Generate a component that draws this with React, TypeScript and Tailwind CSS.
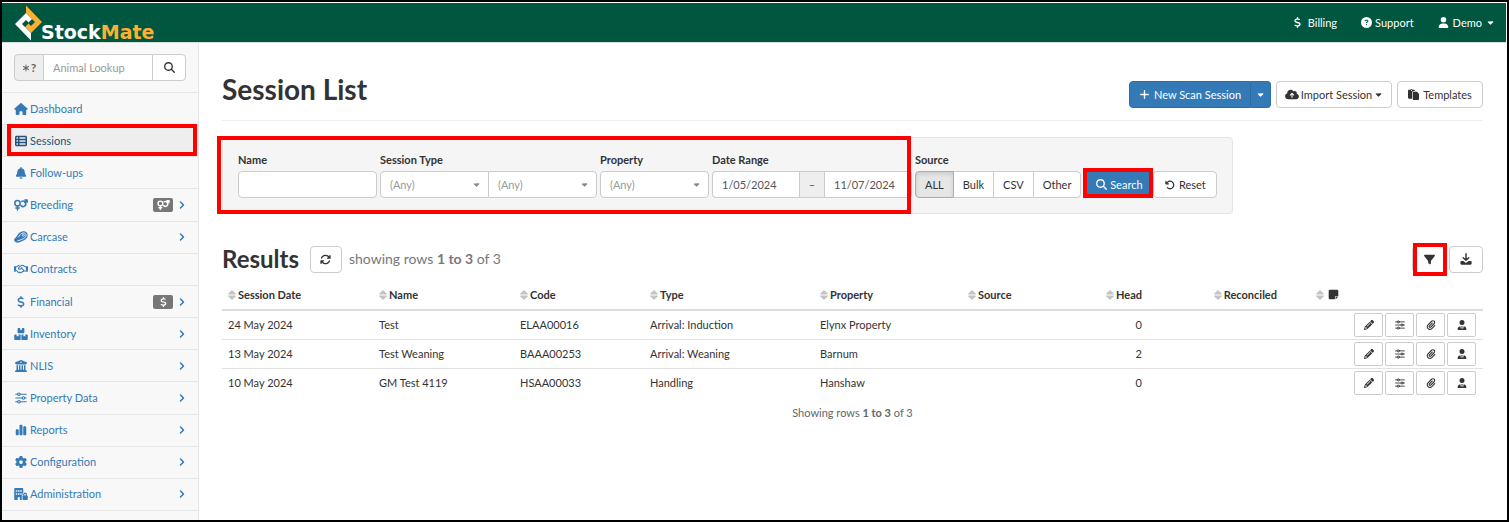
import type { ComponentType, ReactNode } from "react";
import {
  FaArrowRotateLeft,
  FaArrowsRotate,
  FaAsterisk,
  FaBell,
  FaBuildingColumns,
  FaBuildingLock,
  FaCaretDown,
  FaChartSimple,
  FaCircleQuestion,
  FaCloudArrowUp,
  FaDollarSign,
  FaFilter,
  FaGear,
  FaHouse,
  FaMagnifyingGlass,
  FaNoteSticky,
  FaPaperclip,
  FaPaste,
  FaPencil,
  FaPlus,
  FaRegHandshake,
  FaTableList,
  FaUser,
  FaUserTie,
} from "react-icons/fa6";
import { ChevronRight } from "lucide-react";

type IconType = ComponentType<{ className?: string }>;

interface NavItem {
  label: string;
  icon: IconType;
  badge?: IconType;
  expandable?: boolean;
  active?: boolean;
}

interface SessionRow {
  date: string;
  name: string;
  code: string;
  type: string;
  property: string;
  head: number;
}

function SlidersIcon({ className }: { className?: string }) {
  return (
    <svg viewBox="0 0 16 16" className={className} fill="none" stroke="currentColor" strokeWidth="1.4" strokeLinecap="round">
      <path d="M1 3h2.5M7 3h8M1 8h8.5M13 8h2M1 13h2.5M7 13h8" />
      <circle cx="5.2" cy="3" r="1.7" />
      <circle cx="11.2" cy="8" r="1.7" />
      <circle cx="5.2" cy="13" r="1.7" />
    </svg>
  );
}

function GenderIcon({ className }: { className?: string }) {
  return (
    <svg viewBox="0 0 20 16" className={className} fill="none" stroke="currentColor" strokeWidth="2.2" strokeLinecap="round" strokeLinejoin="round">
      <circle cx="5" cy="5.5" r="3.8" />
      <path d="M5 9.5v5.5M2.7 12.4h4.6" />
      <path d="M11 2.9a3.9 3.9 0 1 1-1 6" />
      <path d="M15.400 4.200l3.300-3.100M15.600 1h3.200v3.200" />
    </svg>
  );
}

function SteakIcon({ className }: { className?: string }) {
  return (
    <svg viewBox="0 0 16 14" className={className}>
      <path
        fill="currentColor"
        d="M10.8.3C14 .2 16 2.4 15.8 5.3c-.2 3.4-3 5.2-6 6.3-2.3.8-3.6 2-6 2C1.5 13.6 0 12.2 0 10.3c0-1.800 1.600-2.500 2.700-3.700C4.700 4.300 5.900.5 10.800.3z"
      />
      <path
        fill="none"
        stroke="#f8f8f8"
        strokeWidth="1"
        d="M11 2.2c2 0 3 1.300 2.900 3-.2 2.300-2.300 3.600-4.900 4.500-2 .7-3.200 1.700-5.200 1.700M11 2.200C7.400 2.400 6.700 5.400 4.600 7.500"
      />
      <circle cx="10.8" cy="5" r="1.2" fill="none" stroke="#f8f8f8" strokeWidth=".9" />
    </svg>
  );
}

function BoxesIcon({ className }: { className?: string }) {
  return (
    <svg viewBox="0 0 18 16" className={className} fill="currentColor">
      <path d="M5.500 0h2.200v2.800l1.300-.7 1.300.7V0h2.200c.6 0 1 .4 1 1v5c0 .6-.4 1-1 1h-7c-.6 0-1-.4-1-1V1c0-.6.400-1 1-1z" />
      <path d="M1 8.500h2.200v2.800l1.300-.7 1.300.7V8.500H7.500c.6 0 1 .4 1 1V15c0 .6-.4 1-1 1H1c-.6 0-1-.4-1-1V9.500c0-.6.400-1 1-1z" />
      <path d="M10.500 8.500h1.700v2.800l1.300-.7 1.300.7V8.500H17c.6 0 1 .4 1 1V15c0 .6-.4 1-1 1h-6.500c-.6 0-1-.4-1-1V9.500c0-.6.400-1 1-1z" />
    </svg>
  );
}

function DownloadIcon({ className }: { className?: string }) {
  return (
    <svg viewBox="0 0 16 16" className={className}>
      <path d="M8 1v8.500M4.300 6.200L8 9.800l3.700-3.600" fill="none" stroke="currentColor" strokeWidth="1.9" strokeLinecap="round" strokeLinejoin="round" />
      <path d="M1.500 10.500h3L8 13.200l3.500-2.700h3c.6 0 1 .4 1 1V14c0 .8-.7 1.500-1.500 1.500H2C1.200 15.500.5 14.800.5 14v-2.500c0-.6.400-1 1-1z" fill="currentColor" />
    </svg>
  );
}

function SortIcon() {
  return (
    <svg viewBox="0 0 8 10" className="h-[10px] w-2 shrink-0 text-[#c4c4c4]" fill="currentColor">
      <path d="M4 0l3.700 3.600c.3.400.1.900-.4.900H.7c-.5 0-.7-.5-.4-.9z" />
      <path d="M4 10L.3 6.400C0 6 .2 5.500.7 5.500h6.600c.5 0 .7.500.4.900z" />
    </svg>
  );
}

function Logo() {
  return (
    <a href="#home" className="flex items-end">
      <svg viewBox="0 0 27 36" className="h-9 w-[27px]">
        <path fill="#fbb034" d="M11 .5L27 17 16 28l-6-6 3.500-3.500L16 21l4-4-9-9z" />
        <path fill="#fff" d="M16 35.500L0 19 11 8l6 6-3.500 3.500L11 15l-4 4 9 9z" />
      </svg>
      <span className="-ml-px font-['DejaVu_Sans',sans-serif] text-[19px] leading-[18px] font-bold text-white">
        Stock<span className="text-[#fbb034]">Mate</span>
      </span>
    </a>
  );
}

// Red callout frame drawn over the element it marks
function Highlight({ className }: { className: string }) {
  return <span aria-hidden="true" className={`pointer-events-none absolute z-10 border-4 border-[#ff0000] ${className}`} />;
}

const navItems: NavItem[] = [
  { label: "Dashboard", icon: FaHouse },
  { label: "Sessions", icon: FaTableList, active: true },
  { label: "Follow-ups", icon: FaBell },
  { label: "Breeding", icon: GenderIcon, badge: GenderIcon, expandable: true },
  { label: "Carcase", icon: SteakIcon, expandable: true },
  { label: "Contracts", icon: FaRegHandshake },
  { label: "Financial", icon: FaDollarSign, badge: FaDollarSign, expandable: true },
  { label: "Inventory", icon: BoxesIcon, expandable: true },
  { label: "NLIS", icon: FaBuildingColumns, expandable: true },
  { label: "Property Data", icon: SlidersIcon, expandable: true },
  { label: "Reports", icon: FaChartSimple, expandable: true },
  { label: "Configuration", icon: FaGear, expandable: true },
  { label: "Administration", icon: FaBuildingLock, expandable: true },
];

const sessions: SessionRow[] = [
  { date: "24 May 2024", name: "Test", code: "ELAA00016", type: "Arrival: Induction", property: "Elynx Property", head: 0 },
  { date: "13 May 2024", name: "Test Weaning", code: "BAAA00253", type: "Arrival: Weaning", property: "Barnum", head: 2 },
  { date: "10 May 2024", name: "GM Test 4119", code: "HSAA00033", type: "Handling", property: "Hanshaw", head: 0 },
];

const columns = [
  { label: "Session Date", className: "w-[151px]" },
  { label: "Name", className: "w-[141px]" },
  { label: "Code", className: "w-[130px]" },
  { label: "Type", className: "w-[170px]" },
  { label: "Property", className: "w-[148px]" },
  { label: "Source", className: "w-[108px]" },
  { label: "Head", className: "w-[78px]", right: true },
  { label: "Reconciled", className: "w-[135px]", right: true },
];

const rowActions: { label: string; icon: IconType }[] = [
  { label: "Edit", icon: FaPencil },
  { label: "Settings", icon: SlidersIcon },
  { label: "Attachments", icon: FaPaperclip },
  { label: "Owner", icon: FaUserTie },
];

const buttonBase = "flex h-[27px] items-center justify-center border border-[#ccc] bg-white text-[#333]";

function TopBar() {
  return (
    <header className="mt-px mr-px flex h-10 items-center justify-between border-b border-[#d5e0dc] bg-[#00563f] pr-[11px] pl-[13px] text-white">
      <Logo />
      <nav className="flex items-center gap-6">
        <a href="#billing" className="flex items-center gap-[5px]">
          <FaDollarSign className="size-[11px]" />
          Billing
        </a>
        <a href="#support" className="flex items-center gap-[3px]">
          <FaCircleQuestion className="size-[11px]" />
          Support
        </a>
        <a href="#account" className="flex items-center gap-1">
          <FaUser className="size-[11px]" />
          Demo
          <FaCaretDown className="size-[9px]" />
        </a>
      </nav>
    </header>
  );
}

function Sidebar() {
  return (
    <aside className="flex w-[197px] shrink-0 flex-col border-r border-[#e7e7e7] bg-[#f8f8f8] pb-[9px]">
      <form className="flex px-3 pt-[11px] pb-[11px]" onSubmit={(e) => e.preventDefault()}>
        <span className="flex h-[27px] w-[30px] items-center justify-center gap-px rounded-l border border-[#ccc] bg-[#eee] text-xs font-bold text-[#666]">
          <FaAsterisk className="size-2" />?
        </span>
        <input
          aria-label="Animal Lookup"
          placeholder="Animal Lookup"
          className="h-[27px] min-w-0 flex-1 border-y border-[#ccc] bg-white px-[9px] placeholder:text-[#999]"
        />
        <button aria-label="Look up" className={`${buttonBase} w-[34px] rounded-r`}>
          <FaMagnifyingGlass className="size-[11px]" />
        </button>
      </form>
      <ul className="flex flex-1 flex-col border-t border-[#e7e7e7]">
        {navItems.map(({ label, icon: Icon, badge: Badge, expandable, active }) => (
          <li key={label} className="relative flex min-h-8 flex-1 border-b border-[#e7e7e7]">
            <a
              href={`#${label.toLowerCase()}`}
              className={`flex flex-1 items-center pr-[10px] pl-3 ${active ? "bg-[#eee] text-[#23527c]" : "text-[#337ab7]"}`}
            >
              <span className="mr-[2px] flex w-[14px] justify-center">
                <Icon className="h-3 w-[14px] shrink-0" />
              </span>
              {label}
              {Badge && (
                <span className="ml-auto flex h-[14px] w-5 items-center justify-center rounded-xs bg-[#777] text-white">
                  <Badge className="h-[10px] w-[13px]" />
                </span>
              )}
              {expandable && <ChevronRight className={`size-3 ${Badge ? "ml-[3px]" : "ml-auto"}`} strokeWidth={3} />}
            </a>
            {active && <Highlight className="inset-y-0 right-px left-[5px] -mt-px" />}
          </li>
        ))}
      </ul>
    </aside>
  );
}

function PageHeading() {
  return (
    <div className="flex items-center justify-between border-b border-[#eee] pb-3">
      <h1 className="text-[28px] leading-9 font-bold">Session List</h1>
      <div className="flex gap-[5px] pt-[11px]">
        <div className="flex text-white">
          <button className="flex h-[27px] w-[122px] items-center justify-center gap-1 rounded-l border border-[#2e6da4] bg-[#337ab7]">
            <FaPlus className="size-[11px]" />
            New Scan Session
          </button>
          <button
            aria-label="More scan options"
            className="flex h-[27px] w-5 items-center justify-center rounded-r border border-l-0 border-[#2e6da4] bg-[#337ab7]"
          >
            <FaCaretDown className="size-[9px]" />
          </button>
        </div>
        <button className={`${buttonBase} w-[116px] gap-[2px] rounded`}>
          <FaCloudArrowUp className="h-[11px] w-[14px]" />
          Import Session
          <FaCaretDown className="size-[9px]" />
        </button>
        <button className={`${buttonBase} w-[86px] gap-1 rounded`}>
          <FaPaste className="size-[11px]" />
          Templates
        </button>
      </div>
    </div>
  );
}

function Field({ label, htmlFor, children }: { label: string; htmlFor: string; children: ReactNode }) {
  return (
    <div>
      <label htmlFor={htmlFor} className="mb-[3px] block leading-4 font-bold">
        {label}
      </label>
      <div className="flex">{children}</div>
    </div>
  );
}

function AnySelect({ id, label, className }: { id: string; label?: string; className: string }) {
  return (
    <div className="relative">
      <select
        id={id}
        aria-label={label}
        className={`h-[27px] w-[109px] appearance-none border border-[#ccc] bg-white px-[9px] text-[#999] ${className}`}
      >
        <option>(Any)</option>
      </select>
      <FaCaretDown className="pointer-events-none absolute top-[9px] right-2 size-[9px] text-[#888]" />
    </div>
  );
}

function SearchPanel() {
  const sources = ["ALL", "Bulk", "CSV", "Other"];

  return (
    <form
      className="relative mt-4 flex w-fit gap-[3px] rounded border border-[#e3e3e3] bg-[#f5f5f5] px-[15px] pt-[14px] pb-[15px]"
      onSubmit={(e) => e.preventDefault()}
    >
      <Field label="Name" htmlFor="name">
        <input id="name" className="h-[27px] w-[139px] rounded border border-[#ccc] bg-white px-[9px]" />
      </Field>
      <Field label="Session Type" htmlFor="session-type">
        <AnySelect id="session-type" className="rounded-l" />
        <div className="-ml-px">
          <AnySelect id="session-subtype" label="Session subtype" className="rounded-r" />
        </div>
      </Field>
      <Field label="Property" htmlFor="property">
        <AnySelect id="property" className="rounded" />
      </Field>
      <Field label="Date Range" htmlFor="date-from">
        <input
          id="date-from"
          defaultValue="1/05/2024"
          className="h-[27px] w-[87px] rounded-l border border-r-0 border-[#ccc] bg-white px-[9px] text-[#555]"
        />
        <span className="flex h-[27px] w-[26px] items-center justify-center border border-[#ccc] bg-[#eee] text-[#555]">–</span>
        <input
          aria-label="Date to"
          defaultValue="11/07/2024"
          className="h-[27px] w-[87px] rounded-r border border-l-0 border-[#ccc] bg-white px-[9px] text-[#555]"
        />
      </Field>
      <div role="group" aria-labelledby="source-label">
        <span id="source-label" className="mb-[3px] block leading-4 font-bold">
          Source
        </span>
        <div className="flex">
          {sources.map((source) => (
            <button
              key={source}
              className={`h-[27px] border px-[9px] not-first:-ml-px first:rounded-l last:rounded-r ${
                source === "ALL" ? "z-1 border-[#adadad] bg-[#e6e6e6] shadow-[inset_0_2px_4px_rgba(0,0,0,0.125)]" : "border-[#ccc] bg-white"
              }`}
            >
              {source}
            </button>
          ))}
        </div>
      </div>
      <div className="flex items-end pl-px">
        <div className="relative">
          <button className="flex h-[27px] w-[68px] items-center justify-center gap-[3px] rounded border border-[#2e6da4] bg-[#337ab7] text-white">
            <FaMagnifyingGlass className="size-[11px]" />
            Search
          </button>
          <Highlight className="-top-[3px] right-0 bottom-0 -left-[2px]" />
        </div>
        <button className={`${buttonBase} w-16 gap-1 rounded`}>
          <FaArrowRotateLeft className="size-[10px]" />
          Reset
        </button>
      </div>
      <Highlight className="-top-[2px] -bottom-px -left-[6px] w-[694px]" />
    </form>
  );
}

function Results() {
  return (
    <section className="mt-[31px]">
      <div className="flex items-center">
        <h2 className="text-2xl leading-7 font-bold">Results</h2>
        <button aria-label="Refresh" className={`${buttonBase} ml-[11px] w-8 rounded`}>
          <FaArrowsRotate className="size-[11px]" />
        </button>
        <p className="ml-[7px] text-sm text-[#777]">
          showing rows <b>1 to 3</b> of 3
        </p>
        <div className="ml-auto flex gap-[3px]">
          <div className="relative">
            <button aria-label="Filter" className={`${buttonBase} w-[34px] rounded`}>
              <FaFilter className="size-[11px]" />
            </button>
            <Highlight className="-inset-y-[3px] -right-px left-px" />
          </div>
          <button aria-label="Download" className={`${buttonBase} w-[34px] rounded`}>
            <DownloadIcon className="size-3" />
          </button>
        </div>
      </div>

      <table className="mt-[7px] w-full table-fixed text-left">
        <thead>
          <tr className="h-[30px] border-b-2 border-[#ddd]">
            {columns.map((col) => (
              <th key={col.label} className={`px-[6px] ${col.className}`}>
                <span className={`flex items-center gap-[2px] ${col.right ? "justify-end" : ""}`}>
                  <SortIcon />
                  {col.label}
                </span>
              </th>
            ))}
            <th className="w-[62px] px-[6px]">
              <span className="flex items-center justify-end gap-1">
                <SortIcon />
                <FaNoteSticky aria-label="Notes" className="size-[11px]" />
              </span>
            </th>
            <th aria-label="Actions" className="w-[138px]" />
          </tr>
        </thead>
        <tbody>
          {sessions.map((row) => (
            <tr key={row.code} className="h-[29px] border-[#e2e2e2] not-last:border-b">
              <td className="px-[6px]">{row.date}</td>
              <td className="px-[6px]">{row.name}</td>
              <td className="px-[6px]">{row.code}</td>
              <td className="px-[6px]">{row.type}</td>
              <td className="px-[6px]">{row.property}</td>
              <td />
              <td className="px-[6px] text-right">{row.head}</td>
              <td />
              <td />
              <td className="px-[7px]">
                <div className="flex justify-end gap-[2px]">
                  {rowActions.map(({ label, icon: Icon }) => (
                    <button
                      key={label}
                      aria-label={label}
                      className="flex h-6 w-[29px] items-center justify-center rounded-xs border border-[#ccc] bg-white"
                    >
                      <Icon className="size-[10px]" />
                    </button>
                  ))}
                </div>
              </td>
            </tr>
          ))}
        </tbody>
      </table>
      <p className="mt-2 text-center text-[#666]">
        Showing rows <b>1 to 3</b> of 3
      </p>
    </section>
  );
}

export default function App() {
  return (
    <div className="flex min-h-screen flex-col border-2 border-black bg-white font-[Lato,sans-serif] text-[11px] leading-4 text-[#333]">
      <TopBar />
      <div className="flex flex-1">
        <Sidebar />
        <main className="min-w-0 flex-1 pt-[27px] pr-6 pl-[23px]">
          <PageHeading />
          <SearchPanel />
          <Results />
        </main>
      </div>
    </div>
  );
}
